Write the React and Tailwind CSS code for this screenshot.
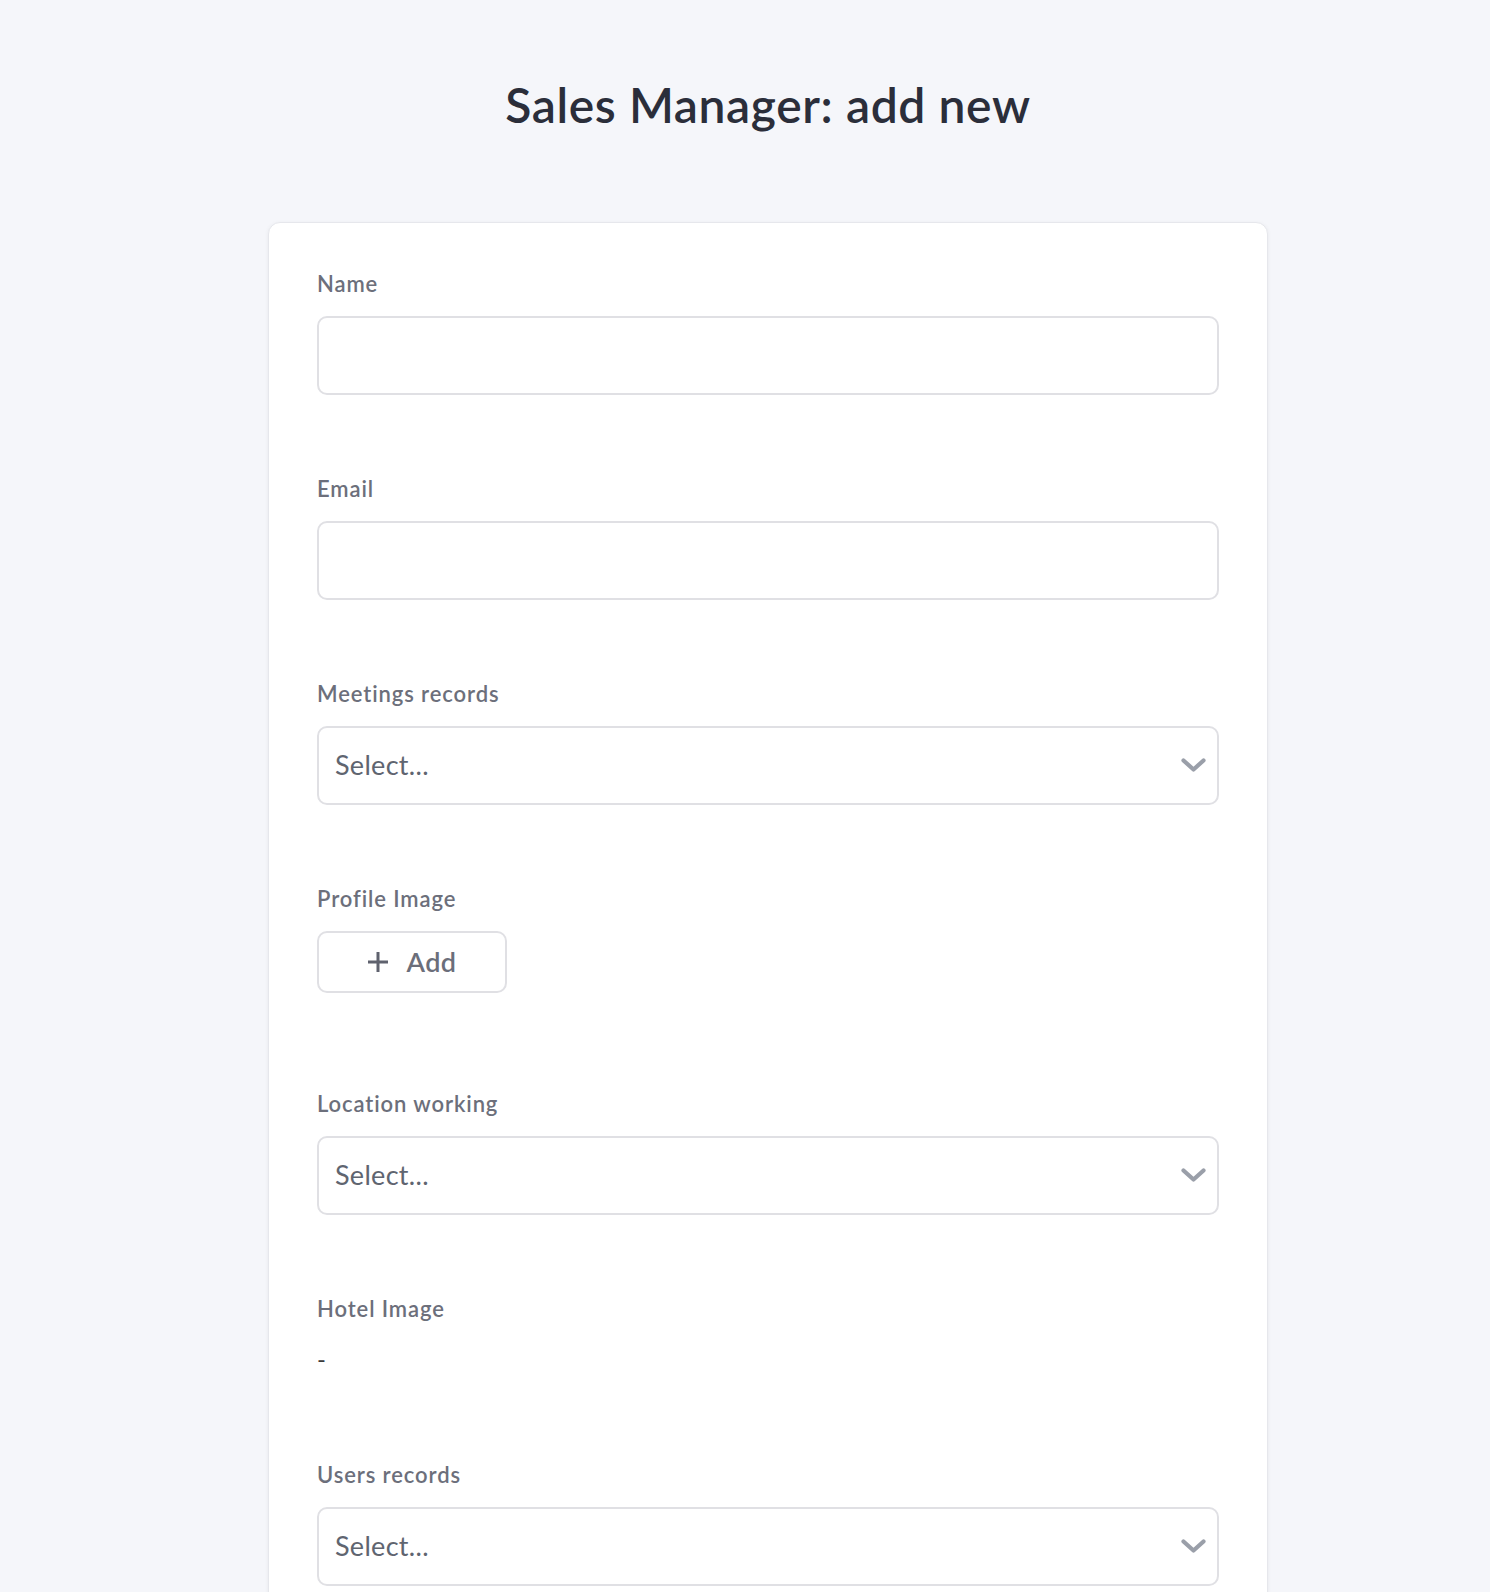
import React from "react";

const font = { fontFamily: "Lato, 'Open Sans', sans-serif" };

function Label({ children }) {
  return (
    <div className="h-6 text-[22px] leading-6 font-semibold tracking-[0.9px] text-[#6c6f7b]">
      {children}
    </div>
  );
}

function TextField({ label }) {
  return (
    <div className="flex flex-col gap-[20px]">
      <Label>{label}</Label>
      <input
        type="text"
        className="h-[79px] w-full rounded-[10px] border-2 border-[#e0e0e4] bg-white px-[18px] text-[26px] text-[#333] outline-none"
      />
    </div>
  );
}

function SelectField({ label }) {
  return (
    <div className="flex flex-col gap-[20px]">
      <Label>{label}</Label>
      <div className="flex h-[79px] w-full items-center justify-between rounded-[10px] border-2 border-[#e0e0e4] bg-white pl-[16px] pr-[11px]">
        <span className="text-[27px] tracking-[0.3px] text-[#5f6570]">Select...</span>
        <svg width="25" height="15" viewBox="0 0 25 15" fill="none">
          <path
            d="M2.5 2.5 L12.5 11.5 L22.5 2.5"
            stroke="#9a9fa9"
            strokeWidth="4.2"
            strokeLinecap="round"
            strokeLinejoin="round"
          />
        </svg>
      </div>
    </div>
  );
}

function UploadField({ label }) {
  return (
    <div className="flex flex-col gap-[20px]">
      <Label>{label}</Label>
      <div className="h-[79px]">
        <button className="flex h-[62px] w-[190px] items-center justify-center gap-[17px] rounded-[10px] border-2 border-[#e0e0e4] bg-white">
          <svg width="22" height="22" viewBox="0 0 22 22" fill="none">
            <path d="M11 1 V21 M1 11 H21" stroke="#5f626e" strokeWidth="3" />
          </svg>
          <span className="text-[27px] font-semibold tracking-[0.5px] text-[#6b6e7a]">Add</span>
        </button>
      </div>
    </div>
  );
}

function ReadonlyField({ label, value }) {
  return (
    <div className="flex flex-col gap-[20px]">
      <Label>{label}</Label>
      <div className="h-[40px] pt-[2px] text-[24px] leading-8 text-[#3a3a3a]">{value}</div>
    </div>
  );
}

export default function App() {
  return (
    <div className="min-h-screen bg-[#f5f6fa] pl-[46px] pb-16" style={font}>
      <div className="flex flex-col items-center">
        <h1 className="pt-[75px] text-[48px] leading-[60px] font-semibold tracking-[0.6px] text-[#2b2e3a]">
          Sales Manager: add new
        </h1>
        <div className="mt-[87px] flex w-[1000px] flex-col gap-[82px] rounded-[12px] border border-[#e6e7ec] bg-white px-[48px] pt-[49px] pb-[120px] shadow-[0_1px_4px_rgba(0,0,0,0.06)]">
          <TextField label="Name" />
          <TextField label="Email" />
          <SelectField label="Meetings records" />
          <UploadField label="Profile Image" />
          <SelectField label="Location working" />
          <ReadonlyField label="Hotel Image" value="-" />
          <SelectField label="Users records" />
        </div>
      </div>
    </div>
  );
}
